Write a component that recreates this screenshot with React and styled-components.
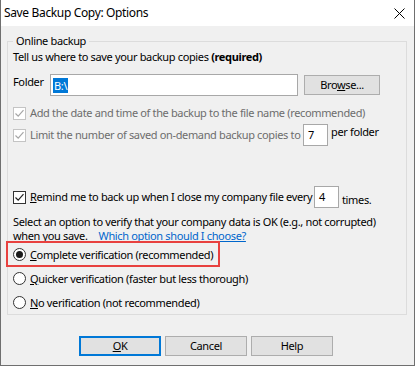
import React from 'react';
import styled, { createGlobalStyle } from 'styled-components';

const Global = createGlobalStyle`
    html, body {
        margin: 0;
        padding: 0;
        background: #ffffff;
    }
    body {
        font-family: 'Noto Sans', 'Liberation Sans', sans-serif;
        font-size: 11px;
        letter-spacing: -0.35px;
        color: #000000;
    }
`;

const Window = styled.div`
    width: 413px;
    height: 365px;
    border: 1px solid #6f6f6f;
    border-top: none;
    background: #f0f0f0;
    display: flex;
    flex-direction: column;
    white-space: nowrap;
`;

const TitleBar = styled.div`
    height: 26px;
    flex-shrink: 0;
    background: #ffffff;
    display: flex;
    align-items: center;
    justify-content: space-between;
    padding: 0 9px 0 3px;
`;

const Title = styled.div`
    font-size: 12px;
    line-height: 16px;
`;

const Body = styled.div`
    flex: 1;
    padding: 7px 7px 0 6px;
    display: flex;
    flex-direction: column;
`;

const Group = styled.fieldset`
    margin: 0;
    padding: 0 5px 1px 5px;
    border: 1px solid #dcdcdc;
    min-inline-size: 0;
    display: flex;
    flex-direction: column;
`;

const Legend = styled.legend`
    padding: 0 3px;
    margin-left: 0;
    line-height: 16px;
`;

const Line = styled.div`
    line-height: 16px;
    margin-top: ${(p) => p.$top || 0}px;
`;

const Row = styled.div`
    display: flex;
    align-items: ${(p) => p.$align || 'center'};
    margin-top: ${(p) => p.$top || 0}px;
    color: ${(p) => (p.$disabled ? '#6d6d6d' : '#000000')};
    line-height: 16px;
`;

const Label = styled.span`
    width: ${(p) => p.$width || 37}px;
    flex-shrink: 0;
`;

const TextBox = styled.div`
    width: 248px;
    height: 22px;
    box-sizing: border-box;
    border: 1px solid #a8a8a8;
    background: #ffffff;
    display: flex;
    align-items: center;
    padding-left: 2px;
`;

const Selected = styled.span`
    background: #0078d7;
    color: #ffffff;
    line-height: 15px;
    padding: 0 1px;
`;

const Button = styled.button`
    box-sizing: border-box;
    width: ${(p) => p.$width || 82}px;
    height: 20px;
    margin: 0;
    margin-left: ${(p) => p.$left || 0}px;
    padding: 0;
    font: inherit;
    letter-spacing: inherit;
    color: #000000;
    background: #e1e1e1;
    border: ${(p) => (p.$default ? '2px solid #0078d7' : '1px solid #adadad')};
    line-height: 16px;
`;

const BoxMark = styled.span`
    width: 13px;
    height: 13px;
    box-sizing: border-box;
    flex-shrink: 0;
    margin-right: 4px;
    border: 1px solid ${(p) => (p.$disabled ? '#c4c4c4' : '#333333')};
    background: #ffffff;
    display: flex;
    align-items: center;
    justify-content: center;
`;

const RadioMark = styled.span`
    width: 13px;
    height: 13px;
    box-sizing: border-box;
    flex-shrink: 0;
    margin-right: 4px;
    border: 1px solid #333333;
    border-radius: 50%;
    background: #ffffff;
    display: flex;
    align-items: center;
    justify-content: center;

    &::after {
        content: '';
        display: ${(p) => (p.$checked ? 'block' : 'none')};
        width: 7px;
        height: 7px;
        border-radius: 50%;
        background: #1a1a1a;
    }
`;

const NumBox = styled.div`
    width: 25px;
    height: 22px;
    box-sizing: border-box;
    flex-shrink: 0;
    border: 1px solid #a8a8a8;
    background: #ffffff;
    color: #000000;
    padding-left: 4px;
    display: flex;
    align-items: center;
`;

const After = styled.span`
    margin-left: 3px;
    align-self: ${(p) => p.$self || 'center'};
    color: #000000;
`;

const Para = styled.div`
    margin-top: 7px;
    line-height: 14px;
`;

const Link = styled.a`
    color: #0066cc;
    text-decoration: underline;
    margin-left: 11px;
    cursor: pointer;
`;

const Highlight = styled.div`
    align-self: flex-start;
    margin: -2px 0 0 -7px;
    height: 26px;
    box-sizing: border-box;
    border: 2px solid #e8413f;
    padding: 0 5px 0 5px;
    display: flex;
    align-items: center;
`;

const RadioRow = styled.div`
    height: 22px;
    margin-top: ${(p) => p.$top || 0}px;
    display: flex;
    align-items: center;
`;

const ButtonBar = styled.div`
    display: flex;
    gap: 4px;
    margin-top: 21px;
    padding-left: 72px;
`;

const Check = ({ disabled }) => (
    <BoxMark $disabled={disabled}>
        <svg width="11" height="11" viewBox="0 0 11 11">
            <path
                d="M1.5 5.5 L4.2 8.2 L9.5 2.2"
                fill="none"
                stroke={disabled ? '#a6a6a6' : '#222222'}
                strokeWidth="1.2"
            />
        </svg>
    </BoxMark>
);

const CloseIcon = () => (
    <svg width="11" height="11" viewBox="0 0 11 11">
        <path d="M0.5 0.5 L10.5 10.5 M10.5 0.5 L0.5 10.5" stroke="#000" strokeWidth="1" />
    </svg>
);

const App = () => {
    return (
        <>
            <Global />
            <Window>
                <TitleBar>
                    <Title>Save Backup Copy: Options</Title>
                    <CloseIcon />
                </TitleBar>
                <Body>
                    <Group>
                        <Legend>Online backup</Legend>
                        <Line>
                            Tell us where to save your backup copies <b>(required)</b>
                        </Line>
                        <Row $align="flex-start" $top={9}>
                            <Label>Folder</Label>
                            <TextBox>
                                <Selected>B:\</Selected>
                            </TextBox>
                            <Button $width={76} $left={6} style={{ marginTop: 1 }}>
                                Bro<u>w</u>se...
                            </Button>
                        </Row>
                        <Row $disabled $top={9}>
                            <Check disabled />
                            <span>Add the date and time of the backup to the file name (recommended)</span>
                        </Row>
                        <Row $disabled $top={3}>
                            <Check disabled />
                            <Label $width={273}>Limit the number of saved on-demand backup copies to</Label>
                            <NumBox>7</NumBox>
                            <After $self="flex-start">per folder</After>
                        </Row>
                        <Row $top={40}>
                            <Check />
                            <Label $width={284}>
                                <u>R</u>emind me to back up when I close my company file every
                            </Label>
                            <NumBox>4</NumBox>
                            <After $self="flex-end">times.</After>
                        </Row>
                        <Para>
                            Select an option to verify that your company data is OK (e.g., not corrupted)
                            <br />
                            when you save.
                            <Link>Which option should I choose?</Link>
                        </Para>
                        <Highlight>
                            <RadioMark $checked />
                            <span>
                                <u>C</u>omplete verification (recommended)
                            </span>
                        </Highlight>
                        <RadioRow>
                            <RadioMark />
                            <span>
                                <u>Q</u>uicker verification (faster but less thorough)
                            </span>
                        </RadioRow>
                        <RadioRow $top={2}>
                            <RadioMark />
                            <span>
                                <u>N</u>o verification (not recommended)
                            </span>
                        </RadioRow>
                    </Group>
                    <ButtonBar>
                        <Button $default>
                            <u>O</u>K
                        </Button>
                        <Button>Cancel</Button>
                        <Button>Help</Button>
                    </ButtonBar>
                </Body>
            </Window>
        </>
    );
};

export default App;
